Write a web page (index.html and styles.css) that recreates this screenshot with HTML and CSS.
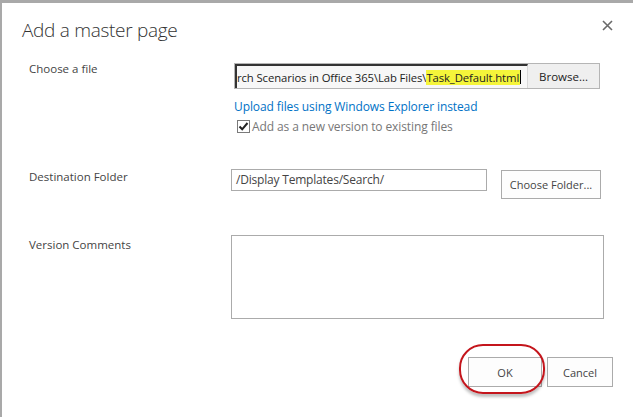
FILE: index.html
```html
<!DOCTYPE html>
<html>
<head>
<meta charset="utf-8">
<link rel="stylesheet" href="styles.css">
</head>
<body>
<div class="dialog">
  <div class="header">
    <h1 class="title">Add a master page</h1>
    <svg class="close" width="11" height="11" viewBox="0 0 11 11"><path d="M1 1 L10 10 M10 1 L1 10" stroke="#6a6a6a" stroke-width="1.6"/></svg>
  </div>
  <div class="form">
    <div class="row row-file">
      <div class="label">Choose a file</div>
      <div class="field">
        <div class="file">
          <div class="file-input"><span class="path">rch Scenarios in Office 365\Lab Files\<span class="hl">Task_Default.html</span></span><span class="caret"></span></div>
          <div class="browse">Browse...</div>
        </div>
        <a class="link">Upload files using Windows Explorer instead</a>
        <div class="check">
          <svg class="box" width="13" height="13" viewBox="0 0 13 13"><rect x="0.5" y="0.5" width="12" height="12" fill="#fff" stroke="#7a7a7a"/><path d="M2.5 6.5 L5.2 9.3 L10.5 3" fill="none" stroke="#222" stroke-width="2"/></svg>
          <span>Add as a new version to existing files</span>
        </div>
      </div>
    </div>
    <div class="row row-dest">
      <div class="label">Destination Folder</div>
      <div class="field dest">
        <div class="text-input">/Display Templates/Search/</div>
        <div class="btn choose">Choose Folder...</div>
      </div>
    </div>
    <div class="row row-comments">
      <div class="label">Version Comments</div>
      <div class="field">
        <div class="textarea"></div>
      </div>
    </div>
  </div>
  <div class="actions">
    <div class="btn ok">OK<span class="ring"></span></div>
    <div class="btn cancel">Cancel</div>
  </div>
</div>
</body>
</html>
```
FILE: styles.css
```css
html, body {
  margin: 0;
  padding: 0;
  background: #fff;
}
.dialog {
  width: 633px;
  height: 417px;
  box-sizing: border-box;
  border-top: 3px solid #a9a9a9;
  border-left: 2px solid #a9a9a9;
  font-family: "Open Sans", "Noto Sans", sans-serif;
  color: #444;
  font-size: 12px;
  overflow: hidden;
}
.header {
  display: flex;
  justify-content: space-between;
  align-items: flex-start;
  padding: 14px 20px 0 20px;
  height: 42px;
  box-sizing: border-box;
}
.title {
  margin: 0;
  font-weight: 300;
  font-size: 19px;
  line-height: 26px;
  color: #333;
  letter-spacing: -0.3px;
}
.close {
  margin-top: 3px;
}
.form {
  display: flex;
  flex-direction: column;
  padding-left: 27px;
}
.row {
  display: flex;
}
.label {
  width: 202px;
  flex: none;
  font-size: 11.5px;
  line-height: 16px;
  color: #444;
}
.row-file {
  margin-top: 18px;
}
.row-file .label {
  margin-top: -2px;
}
.file {
  display: flex;
  width: 366px;
  height: 26px;
  margin-left: 3px;
  box-sizing: border-box;
  border: 1px solid #b5b5b5;
}
.file-input {
  width: 293px;
  flex: none;
  box-sizing: border-box;
  border-top: 2px solid #333;
  border-left: 2px solid #333;
  border-right: 1px solid #d8d8d8;
  background: #f7f7f7;
  display: flex;
  align-items: center;
  overflow: hidden;
  white-space: nowrap;
  font-size: 11.3px;
  color: #222;
}
.path {
  letter-spacing: -0.1px;
}
.hl {
  background: #f5f53a;
  padding-right: 1px;
}
.caret {
  display: inline-block;
  width: 1px;
  height: 14px;
  background: #000;
}
.browse {
  flex: 1;
  background: #efefef;
  display: flex;
  align-items: center;
  justify-content: center;
  font-size: 11.5px;
  color: #222;
}
.link {
  display: block;
  margin: 9px 0 0 3px;
  color: #0072c6;
  font-size: 12px;
  line-height: 17px;
  letter-spacing: -0.1px;
}
.check {
  display: flex;
  align-items: center;
  margin: 3px 0 0 6px;
  color: #777;
  font-size: 12px;
  line-height: 17px;
  letter-spacing: -0.1px;
}
.check .box {
  margin-right: 2px;
}
.row-dest {
  margin-top: 34px;
}
.row-dest .label {
  margin-top: 0;
}
.dest {
  display: flex;
  align-items: flex-start;
}
.text-input {
  width: 256px;
  height: 22px;
  box-sizing: border-box;
  border: 1px solid #ababab;
  font-size: 12px;
  line-height: 20px;
  padding-left: 4px;
  color: #444;
  letter-spacing: -0.2px;
}
.btn {
  box-sizing: border-box;
  border: 1px solid #ababab;
  background: #fdfdfd;
  display: flex;
  align-items: center;
  justify-content: center;
  font-size: 11px;
  color: #444;
}
.choose {
  width: 100px;
  height: 29px;
  margin-left: 14px;
  margin-top: 1px;
}
.row-comments {
  margin-top: 36px;
}
.row-comments .label {
  margin-top: 2px;
}
.textarea {
  width: 373px;
  height: 84px;
  box-sizing: border-box;
  border: 1px solid #ababab;
}
.actions {
  display: flex;
  justify-content: flex-end;
  gap: 5px;
  padding-right: 20px;
  margin-top: 38px;
}
.ok {
  position: relative;
  width: 74px;
  height: 30px;
}
.cancel {
  width: 66px;
  height: 30px;
}
.ring {
  position: absolute;
  left: -10px;
  top: -14px;
  width: 82px;
  height: 46px;
  border: 2px solid #c4151c;
  border-radius: 24px;
  box-shadow: 0 3px 3px rgba(0,0,0,0.25);
}
```
